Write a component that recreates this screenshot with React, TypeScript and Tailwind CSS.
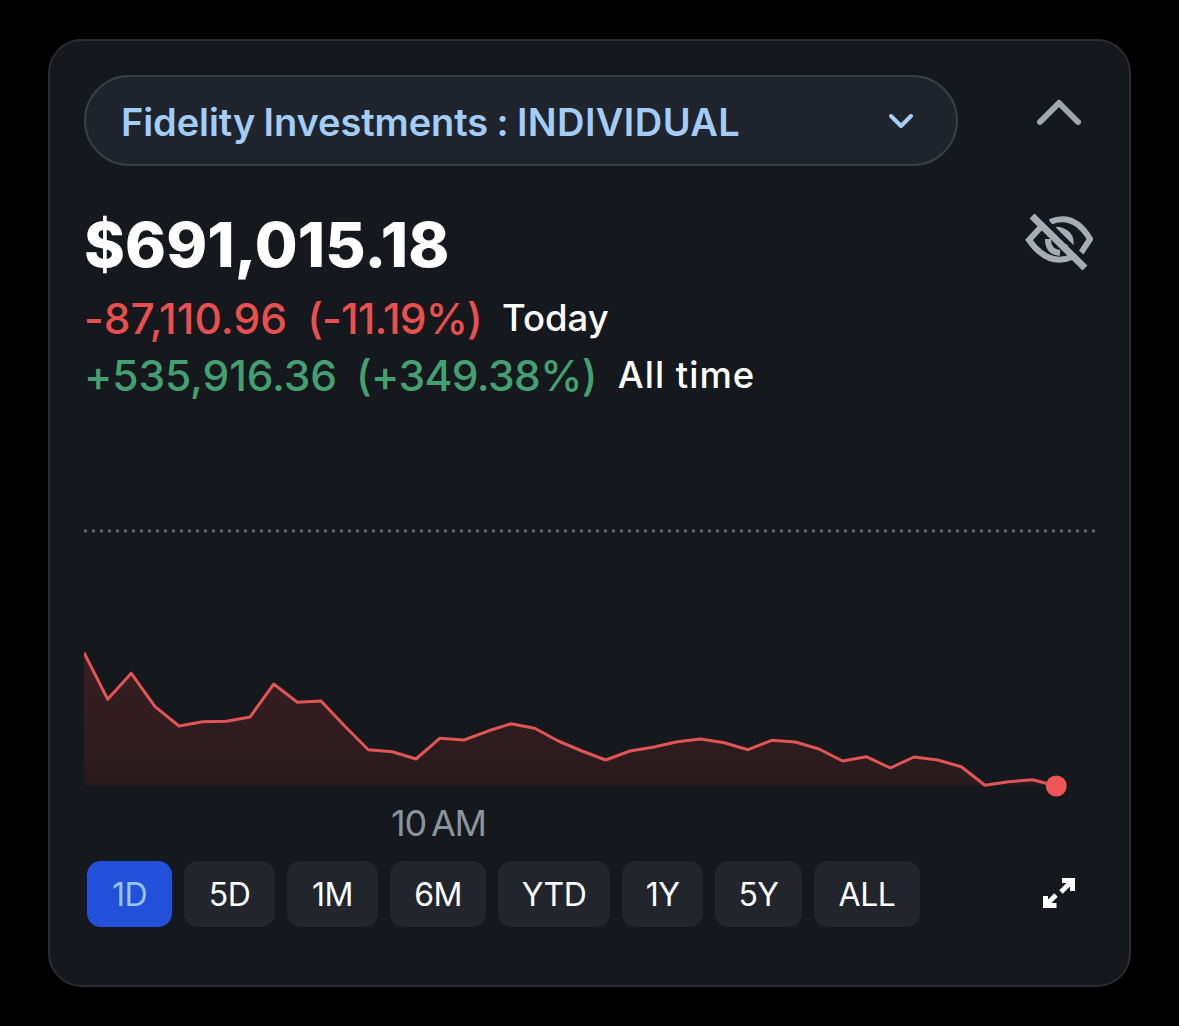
const pts: [number, number][] = [[84,652.7],[107.7,699.3],[131.3,673.3],[155,706.7],[179,726],[202.7,721.7],[226.7,721.3],[250,717],[273.7,684],[297.3,702.3],[321,701],[344.7,726],[368.3,749.7],[392.3,751.7],[416,759],[439.7,738.3],[464,740],[487.3,731.3],[511,723.7],[534.7,728.3],[558.3,741],[582,751],[605.7,760],[630,751],[654,747],[677.3,741.7],[700.7,739],[724.3,742.7],[748,749.7],[771.7,740.3],[795.3,742],[819,749],[842.7,761],[866.3,756.7],[890.3,768],[914,757],[937.7,760],[961.3,766.7],[985,785.3],[1008.7,781.7],[1032.7,779.7],[1056.3,786]];
const line = pts.map((p) => `${p[0] - 84},${p[1] - 520}`).join(" ");
const area = `0,265 ${line} 972.3,265`;

const ranges = [
  { label: "1D", w: "w-[85px]", active: true },
  { label: "5D", w: "w-[91px]" },
  { label: "1M", w: "w-[91px]" },
  { label: "6M", w: "w-[96px]" },
  { label: "YTD", w: "w-[112px]" },
  { label: "1Y", w: "w-[81px]" },
  { label: "5Y", w: "w-[87px]" },
  { label: "ALL", w: "w-[106px]" },
];

export default function App() {
  return (
    <div className="h-[1026px] w-[1179px] overflow-hidden bg-black pl-[48px] pt-[39px] font-['Inter',sans-serif]">
      <div className="flex h-[948px] w-[1083px] flex-col rounded-[34px] border-2 border-[#2a2d33] bg-[#15181d] pl-[34px] pt-[34px]">
        <div className="flex h-[91px] items-start">
          <div className="flex h-[91px] w-[874px] items-center justify-between rounded-[46px] border-2 border-[#3a3f45] bg-[#20252d] pl-[35px] pr-[42px]">
            <span className="pt-[3px] text-[38px] font-semibold tracking-[-0.1px] text-[#a3cdf7] [word-spacing:-1px]">Fidelity Investments : <span className="tracking-[0.4px]">INDIVIDUAL</span></span>
            <svg width="26" height="16" viewBox="0 0 26 16" fill="none" stroke="#a8d0f5" strokeWidth="4" strokeLinecap="round" strokeLinejoin="round"><path d="M3 3 L13 13 L23 3" /></svg>
          </div>
          <svg className="ml-[79px] mt-[23px]" width="44" height="28" viewBox="0 0 44 28" fill="none" stroke="#a0a8b0" strokeWidth="6" strokeLinecap="round" strokeLinejoin="round"><path d="M3 24 L22 5 L41 24" /></svg>
        </div>

        <div className="mt-[41px] flex h-[76px] items-start justify-between pr-[36px]">
          <span className="text-[62px] font-extrabold leading-[76px] tracking-[0.1px] text-white">$691,015.18</span>
          <svg className="mt-[4px]" width="68" height="60" viewBox="1025 208 68 60" fill="none" stroke="#a6adb5" strokeWidth="6">
            <path d="M1050 219 Q1074 209 1090 236 L1081 250" />
            <path d="M1040 225 L1029 237 Q1048 264 1072 254" />
            <path d="M1056 227 Q1072 229 1070 243" strokeWidth="7" />
            <path d="M1048 236 Q1048 249 1060 250" strokeWidth="6" />
            <path d="M1036 208 L1091 262" stroke="#15181d" strokeWidth="4" />
            <path d="M1032 213 L1085 265" strokeWidth="7" />
          </svg>
        </div>

        <div className="mt-[7px] flex h-[57px] items-center">
          <span className="text-[42.5px] font-medium tracking-[0.1px] text-[#ea4f4f]">-87,110.96</span>
          <span className="ml-[20px] text-[42.5px] font-medium tracking-[-0.8px] text-[#ea4f4f]">(-11.19%)</span>
          <span className="ml-[20px] text-[36.5px] font-medium text-white">Today</span>
        </div>
        <div className="flex h-[57px] items-center">
          <span className="text-[42.5px] font-medium tracking-[-0.1px] text-[#44a070]">+535,916.36</span>
          <span className="ml-[19px] text-[42.5px] font-medium tracking-[-0.6px] text-[#44a070]">(+349.38%)</span>
          <span className="ml-[21px] text-[36.5px] font-medium tracking-[1px] text-white">All time</span>
        </div>

        <svg className="mt-[116px]" width="1011" height="280" viewBox="0 0 1011 280" fill="none">
          <defs>
            <linearGradient id="fade" x1="0" y1="0" x2="0" y2="1">
              <stop offset="0" stopColor="#3a1f23" />
              <stop offset="1" stopColor="#281a1e" />
            </linearGradient>
          </defs>
          <path d="M0 11 H1011" stroke="#5c6168" strokeWidth="3" strokeDasharray="3 5" />
          <polygon points={area} fill="url(#fade)" />
          <polyline points={line} stroke="#e25555" strokeWidth="3" strokeLinejoin="round" />
          <circle cx="972.3" cy="266" r="10.5" fill="#ee5555" />
        </svg>

        <div className="mt-[3px] h-[40px] pl-[307px] text-[36px] leading-[40px] tracking-[-1.2px] text-[#8b939c] [word-spacing:-4px]">10 AM</div>

        <div className="mt-[18px] flex items-center pl-[3px]">
          <div className="flex gap-[12px]">
            {ranges.map((r) => (
              <div
                key={r.label}
                className={`flex h-[66px] items-center justify-center rounded-[14px] pt-[2px] text-[32px] tracking-[-0.5px] ${r.w} ${r.active ? "bg-[#2250db] text-[#9cc4f5]" : "bg-[#22262c] text-white"}`}
              >
                {r.label}
              </div>
            ))}
          </div>
          <svg className="ml-[122px]" width="36" height="36" viewBox="1042 877 36 36" fill="none" stroke="#ffffff" strokeWidth="5">
            <path d="M1062 881.5 H1072.5 V892" />
            <path d="M1071.5 882.5 L1061 893" />
            <path d="M1045.5 897 V906.5 H1056.5" />
            <path d="M1046.5 905.5 L1056 896" />
          </svg>
        </div>
      </div>
    </div>
  );
}
